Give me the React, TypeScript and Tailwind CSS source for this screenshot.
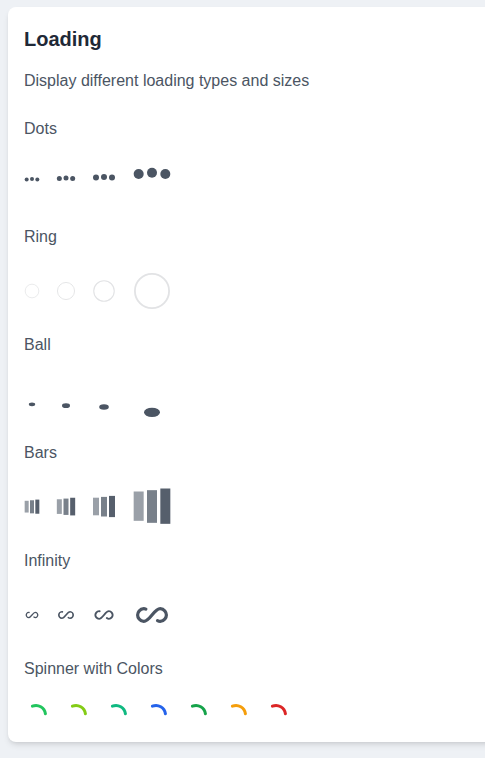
const SIZES = [16, 20, 24, 40];
const DARK = "#4b5563";

function Dots({ s }: { s: number }) {
  return (
    <svg width={s} height={s} viewBox="0 0 24 24" className="shrink-0">
      <circle cx="4" cy="6.6" r="3" fill={DARK} />
      <circle cx="12" cy="5.9" r="3" fill={DARK} />
      <circle cx="20" cy="6.6" r="3" fill={DARK} />
    </svg>
  );
}

function Ring({ s }: { s: number }) {
  return (
    <svg width={s} height={s} viewBox="0 0 44 44" className="shrink-0">
      <circle cx="22" cy="22" r="18.8" fill="none" stroke="#e2e3e5" strokeWidth="2" />
    </svg>
  );
}

function Ball({ s }: { s: number }) {
  return (
    <svg width={s} height={s} viewBox="0 0 24 24" className="shrink-0">
      <ellipse cx="12" cy="20" rx="4.8" ry="2.8" fill={DARK} />
    </svg>
  );
}

function Bars({ s }: { s: number }) {
  return (
    <svg width={s} height={s} viewBox="0 0 24 24" className="shrink-0">
      <rect x="1" y="2.7" width="6" height="17.6" fill={DARK} fillOpacity="0.56" />
      <rect x="9" y="1.9" width="6" height="19.6" fill={DARK} fillOpacity="0.75" />
      <rect x="17" y="0.9" width="6" height="21.2" fill={DARK} fillOpacity="0.94" />
    </svg>
  );
}

function Infinity({ s }: { s: number }) {
  return (
    <svg width={s} height={s} viewBox="0 0 100 100" className="shrink-0">
      <path
        transform="translate(10 10) scale(0.8)"
        fill="none"
        stroke={DARK}
        strokeWidth="10"
        strokeLinecap="round"
        strokeDasharray="205.27 51.32"
        strokeDashoffset="8"
        d="M24.3 30C11.4 30 5 43.3 5 50s6.4 20 19.3 20c19.3 0 32.1-40 51.4-40C88.6 30 95 43.3 95 50s-6.4 20-19.3 20C56.4 70 43.6 30 24.3 30z"
      />
    </svg>
  );
}

function Spinner({ color }: { color: string }) {
  return (
    <svg width="24" height="24" viewBox="0 0 24 24" className="shrink-0">
      <path
        d="M8.44 3.19A9.5 9.5 0 0 1 21.41 10.68"
        fill="none"
        stroke={color}
        strokeWidth="3"
        strokeLinecap="round"
      />
    </svg>
  );
}

const spinnerColors = ["#22c55e", "#84cc16", "#10b981", "#2563eb", "#16a34a", "#f59e0b", "#dc2626"];

function Section({ label, children }: { label: string; children: React.ReactNode }) {
  return (
    <div className="mb-[22px] last:mb-0">
      <p className="leading-6 text-[#4b5563]">{label}</p>
      <div className="mt-[22px] flex items-center gap-4">{children}</div>
    </div>
  );
}

export default function App() {
  return (
    <div className="min-h-screen overflow-hidden bg-[#eef1f5] pl-2 pt-[7px] font-['Liberation_Sans',Arial,sans-serif]">
      <div className="w-[600px] rounded-lg bg-white px-4 pb-[15px] pt-[18px] shadow-md">
        <h2 className="text-xl font-bold leading-7 text-[#1f2937]">Loading</h2>
        <p className="mt-4 text-base leading-6 text-[#4b5563]">Display different loading types and sizes</p>

        <div className="mt-6">
          <Section label="Dots">
            {SIZES.map((s) => <Dots key={s} s={s} />)}
          </Section>
          <Section label="Ring">
            {SIZES.map((s) => <Ring key={s} s={s} />)}
          </Section>
          <Section label="Ball">
            {SIZES.map((s) => <Ball key={s} s={s} />)}
          </Section>
          <Section label="Bars">
            {SIZES.map((s) => <Bars key={s} s={s} />)}
          </Section>
          <Section label="Infinity">
            {SIZES.map((s) => <Infinity key={s} s={s} />)}
          </Section>
          <Section label="Spinner with Colors">
            {spinnerColors.map((c) => <Spinner key={c} color={c} />)}
          </Section>
        </div>
      </div>
    </div>
  );
}
